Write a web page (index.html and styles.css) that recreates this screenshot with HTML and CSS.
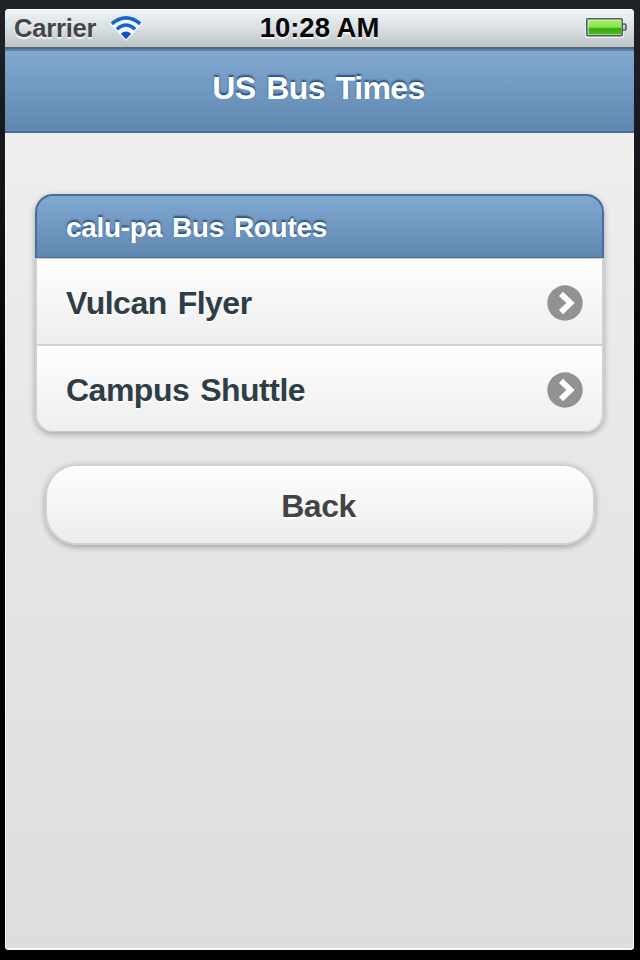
FILE: index.html
```
<!DOCTYPE html>
<html lang="en">
<head>
<meta charset="utf-8">
<title>US Bus Times</title>
<link rel="stylesheet" href="styles.css">
</head>
<body>
<div class="screen">
  <div class="status">
    <div class="carrier">
      <span>Carrier</span>
      <svg class="wifi" width="34" height="26" viewBox="0 0 34 26">
        <path d="M0.5 8.5Q17-6 33.500 8.500L17 26Z" fill="#f7fafc"/>
        <g fill="none" stroke="#1a63cf">
          <path d="M2.800 8.800Q17-3.200 31.200 8.800" stroke-width="3.600"/>
          <path d="M7.800 14.200Q17 6 26.200 14.200" stroke-width="3.400"/>
        </g>
        <path d="M11.800 18.800Q17 14.200 22.200 18.800L17 24.200Z" fill="#124fc0"/>
      </svg>
    </div>
    <span class="clock">10:28 AM</span>
    <div class="power">
      <svg width="44" height="24" viewBox="0 0 44 24">
        <defs>
          <linearGradient id="charge" x1="0" y1="0" x2="0" y2="1">
            <stop offset="0" stop-color="#a0ee62"/>
            <stop offset=".45" stop-color="#8be84c"/>
            <stop offset=".6" stop-color="#38a810"/>
            <stop offset="1" stop-color="#4dbd1d"/>
          </linearGradient>
        </defs>
        <rect x="1" y="1" width="39" height="21" rx="2" fill="#eef1f6"/>
        <rect x="2.800" y="2.800" width="35.400" height="17" rx="1" fill="#dcf5d0" stroke="#515966" stroke-width="1.600"/>
        <rect x="4.500" y="4.500" width="33" height="14" fill="url(#charge)"/>
        <path d="M39 8h1.500a1.500 1.500 0 0 1 1.500 1.500v3a1.500 1.500 0 0 1-1.500 1.500H39" fill="#cdd3da" stroke="#515966" stroke-width="1.600"/>
      </svg>
    </div>
  </div>
  <header class="bar"><h1>US Bus Times</h1></header>
  <main class="content">
    <ul class="routes">
      <li class="divider">calu-pa Bus Routes</li>
      <li class="route"><span>Vulcan Flyer</span>
        <svg class="arrow" width="36" height="36" viewBox="0 0 36 36"><circle cx="18" cy="18" r="17.700" fill="#929292"/><path d="M14 8.800L23.500 18L14 27.200" fill="none" stroke="#fff" stroke-width="5.800"/></svg>
      </li>
      <li class="route"><span>Campus Shuttle</span>
        <svg class="arrow" width="36" height="36" viewBox="0 0 36 36"><circle cx="18" cy="18" r="17.700" fill="#929292"/><path d="M14 8.800L23.500 18L14 27.200" fill="none" stroke="#fff" stroke-width="5.800"/></svg>
      </li>
    </ul>
    <button class="back" type="button">Back</button>
  </main>
</div>
</body>
</html>
```
FILE: styles.css
```
* { box-sizing: border-box; }
body {
  margin: 0;
  height: 960px;
  padding: 9px 6px 10px 5px;
  overflow: hidden;
  background: linear-gradient(#222329, #17181d 150px, #000 400px);
  font: bold 32px/36px "Liberation Sans", Arial, sans-serif;
}
.screen {
  height: 941px;
  display: flex;
  flex-direction: column;
  overflow: hidden;
  border-radius: 4px;
  background: #ddd;
}
.status {
  height: 40px;
  flex: none;
  display: grid;
  grid-template-columns: 1fr auto 1fr;
  align-items: center;
  padding: 0 6px 2px 9px;
  border-bottom: 2px solid #59656f;
  border-top: 1px solid #fff;
  background: linear-gradient(#edf2f5, #d9dfe2 50%, #bcc4c6);
}
.carrier {
  display: flex;
  align-items: center;
  gap: 13px;
  color: #444648;
  font-size: 25.500px;
  letter-spacing: -.2px;
  text-shadow: 0 2px 1px #f2f5f6;
}
.wifi { display: block; }
.clock {
  margin-left: -3px;
  color: #080808;
  font-size: 27.500px;
  text-shadow: 0 2px 1px #f2f5f6;
}
.power { display: flex; justify-content: flex-end; }
.bar {
  height: 84px;
  flex: none;
  display: flex;
  align-items: center;
  justify-content: center;
  padding: 0 2px 7px 0;
  border-top: 2px solid #5683b1;
  border-bottom: 2px solid #456f9a;
  background: linear-gradient(#81a8d0, #5e87b0);
}
h1 {
  margin: 0;
  color: #fff;
  font-size: 32px;
  letter-spacing: -.6px;
  word-spacing: 2.500px;
  text-shadow: 0 -2px 2px #254f7a;
}
.content {
  flex: 1;
  padding: 61px 29px 0 30px;
  border: solid #f7f7f7;
  border-width: 0 1px 2px;
  background: linear-gradient(#eee, #ddd);
}
.routes {
  list-style: none;
  margin: 0 0 32px -1px;
  width: 569px;
  padding: 0;
  border-radius: 18px;
  box-shadow: 0 2px 6px rgba(0, 0, 0, .3);
}
.divider {
  height: 64px;
  padding: 14px 29px;
  border: 2px solid #456f9a;
  border-bottom-width: 1px;
  border-radius: 18px 18px 0 0;
  background: linear-gradient(#81a8d0, #5e87b0);
  color: #fff;
  font-size: 28px;
  letter-spacing: -.3px;
  word-spacing: 2.500px;
  text-shadow: 0 -2px 2px #254f7a;
}
.route {
  display: flex;
  height: 86px;
  align-items: center;
  justify-content: space-between;
  padding: 2px 19px 0 29px;
  border: 2px solid #d0d0d0;
  border-bottom: 0;
  border-top-width: 1px;
  background: linear-gradient(#fefefe, #eee);
  color: #2f3e46;
  font-size: 32px;
  letter-spacing: -.5px;
  word-spacing: 2.500px;
  text-shadow: 0 2px 1px #fff;
}
.route:last-child {
  height: 88px;
  border-top-width: 2px;
  border-bottom: 1px solid #ccc;
  border-radius: 0 0 18px 18px;
}
.back {
  display: block;
  width: 550px;
  height: 81px;
  margin: 0 0 0 9px;
  padding: 3px 3px 0 0;
  border: 2px solid #d0d0d0;
  border-radius: 32px;
  background: linear-gradient(#fefefe, #ececec);
  box-shadow: 0 2px 6px rgba(0, 0, 0, .3);
  color: #444;
  font: inherit;
  letter-spacing: -.5px;
  text-shadow: 0 2px 1px #fff;
}
```
